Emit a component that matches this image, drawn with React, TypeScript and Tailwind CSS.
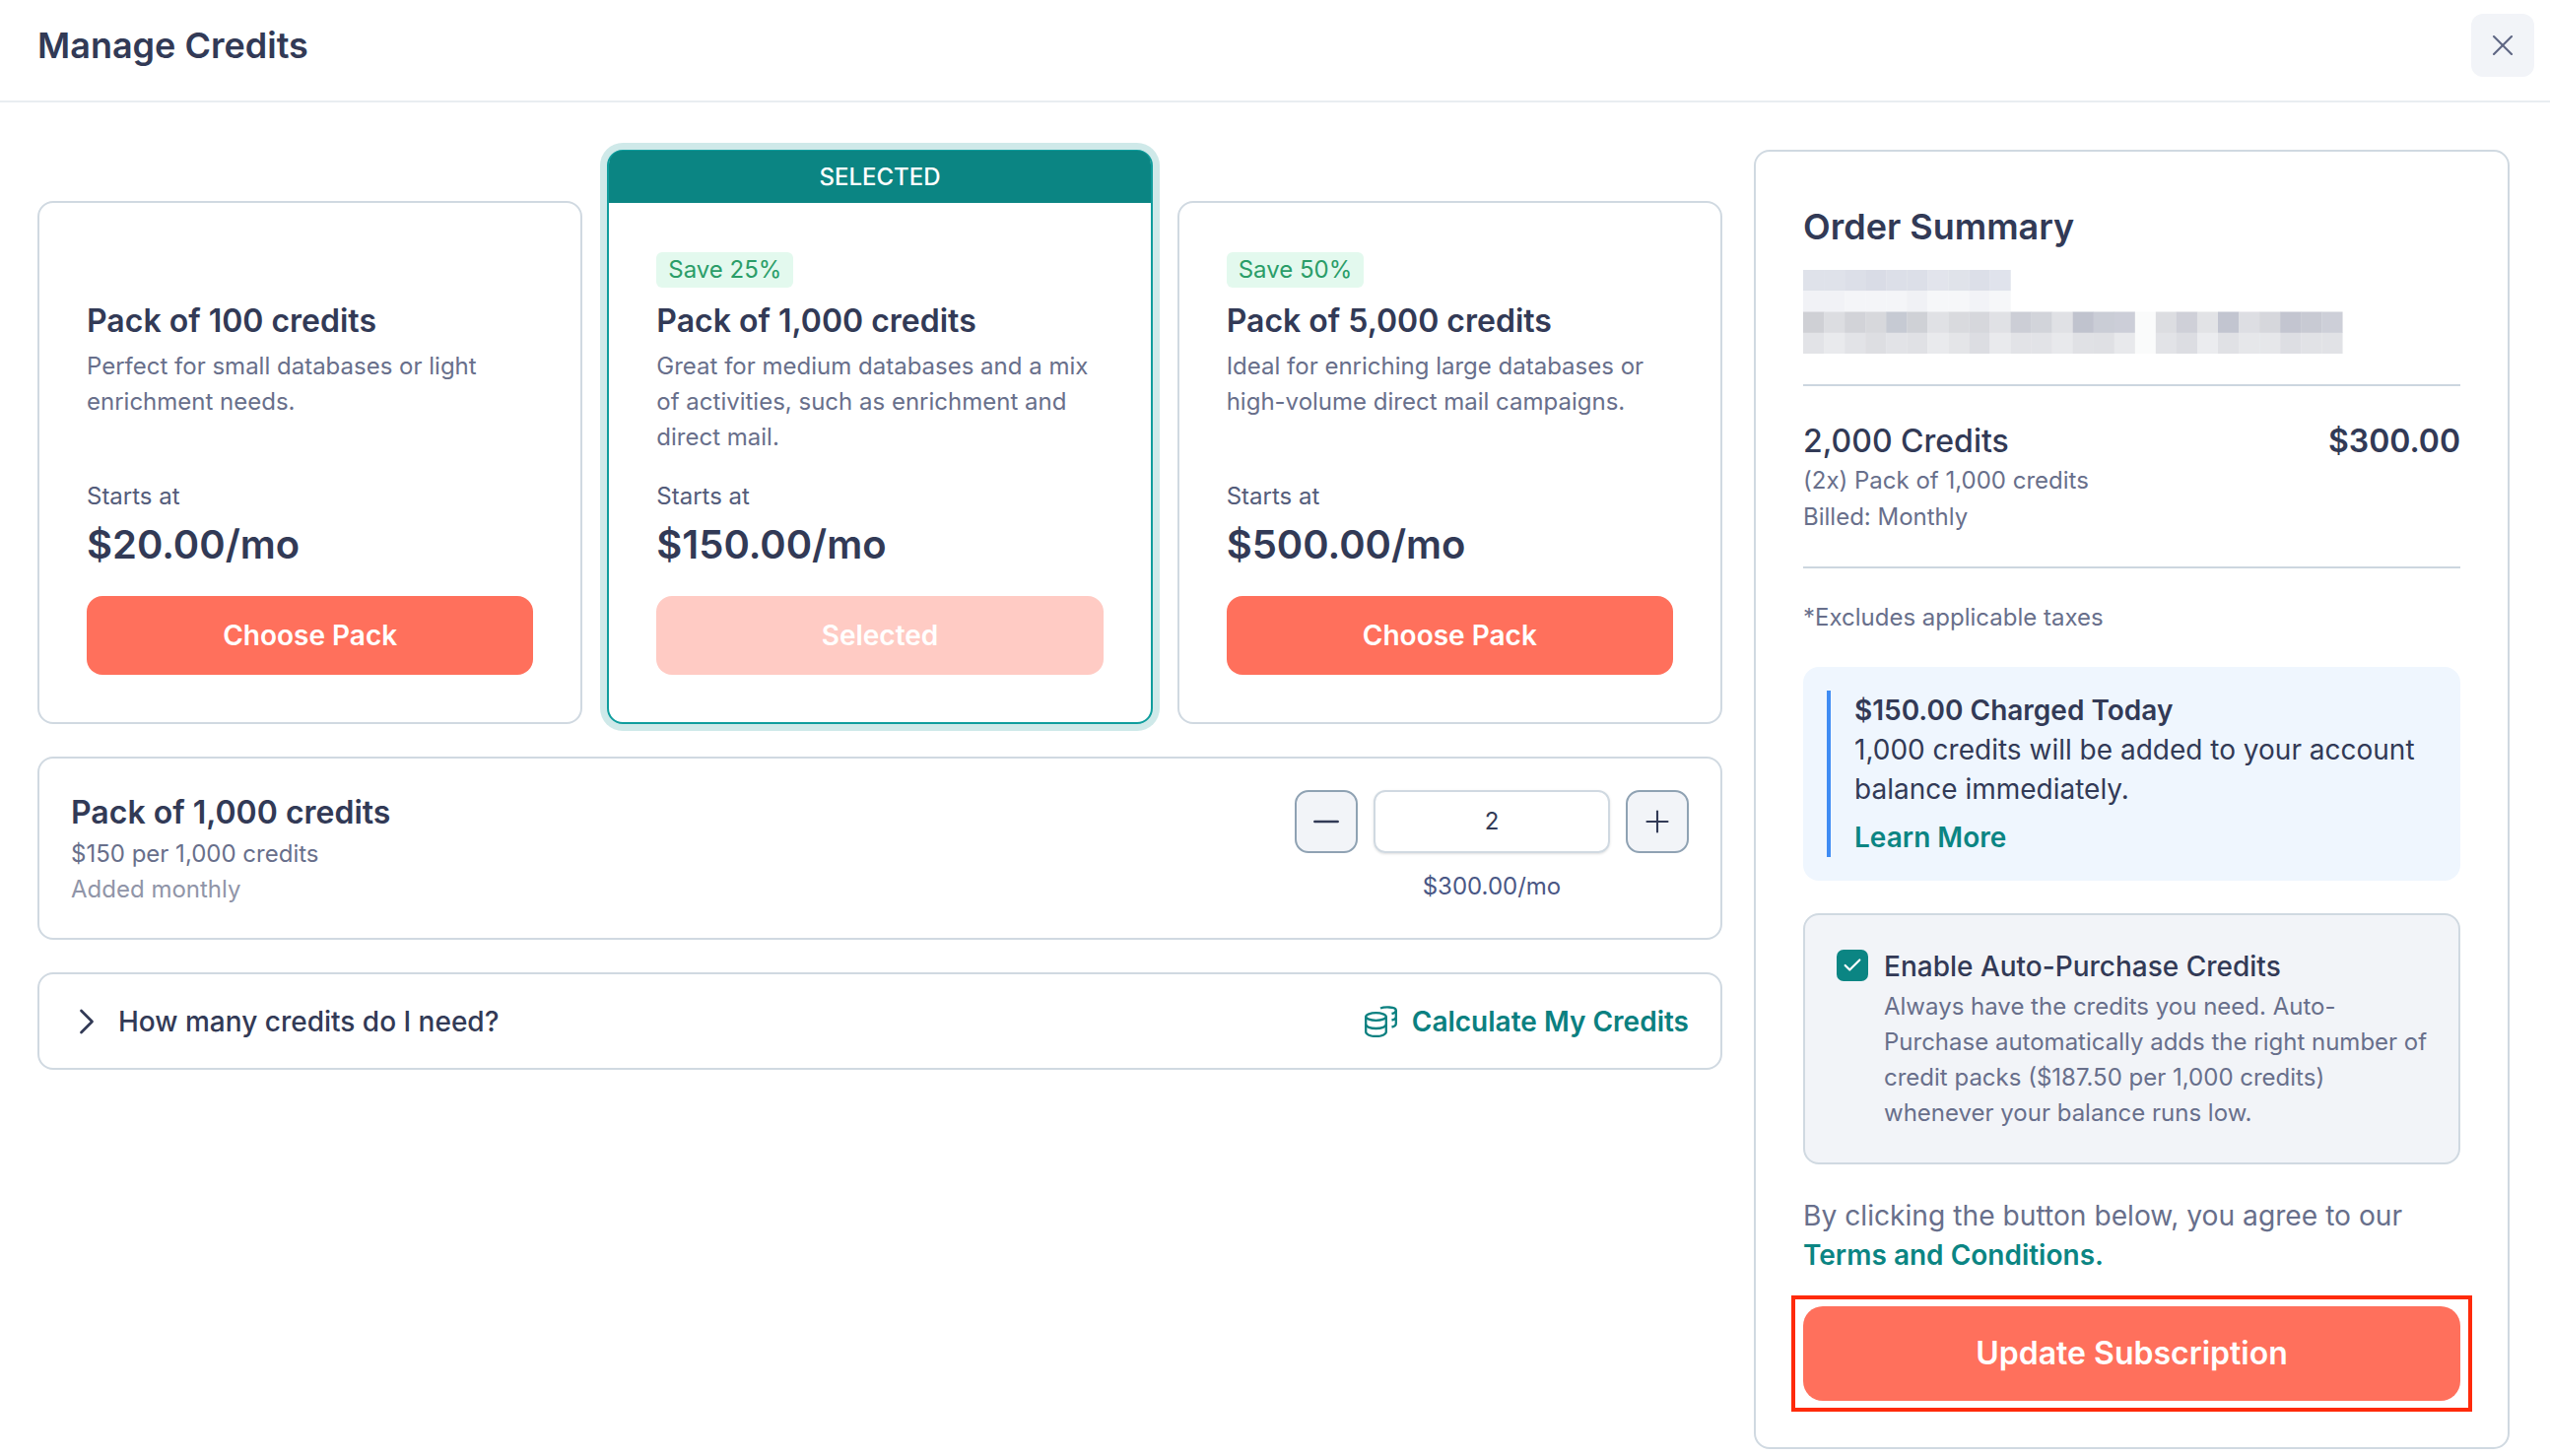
import { Check, ChevronRight, Minus, Plus, X } from "lucide-react"

interface Pack {
  title: string
  desc: string
  price: string
  save?: string
  selected?: boolean
}

const packs: Pack[] = [
  {
    title: "Pack of 100 credits",
    desc: "Perfect for small databases or light enrichment needs.",
    price: "$20.00/mo",
  },
  {
    title: "Pack of 1,000 credits",
    desc: "Great for medium databases and a mix of activities, such as enrichment and direct mail.",
    price: "$150.00/mo",
    save: "Save 25%",
    selected: true,
  },
  {
    title: "Pack of 5,000 credits",
    desc: "Ideal for enriching large databases or high-volume direct mail campaigns.",
    price: "$500.00/mo",
    save: "Save 50%",
  },
]

// pixelated block over the account name and address
const mosaic: string[][] = [
  ["#dfe2ea", "#dfe2ea", "#dcdfe8", "#d9dce6", "#dcdfe8", "#dcdfe8", "#e2e4ec", "#e0e3ea", "#dcdfe8", "#e0e3ec"],
  ["#f1f2f6", "#f1f2f6", "#f4f5f8", "#f4f5f8", "#f4f5f8", "#f0f1f5", "#f6f7f9", "#f6f7f9", "#f2f3f7", "#f6f7f9"],
  ["#cfd0d5", "#dcdde1", "#d2d3d8", "#d7d8dc", "#c6cad3", "#cfd1d6", "#e0e1e5", "#d9dade", "#d6d7dc", "#e0e1e5", "#ccced6", "#d2d4da", "#e0e1e5", "#c0c3ce", "#cacdd6", "#ccced8", "#fafbfb", "#dcdde1", "#cfd0d8", "#e2e3e6", "#c2c5d0", "#dddee3", "#d6d7dc", "#c3c5d0", "#c8cad3", "#cdcfd8"],
  ["#e2e3e7", "#e9eaed", "#e2e3e7", "#dddee2", "#e2e3e7", "#e0e1e5", "#e9eaed", "#e4e5e8", "#dcdde2", "#e9eaed", "#e2e3e7", "#e2e3e7", "#e8e9ec", "#e0e1e5", "#dfe0e4", "#e8e9ec", "#fafbfb", "#e2e3e7", "#dcdde2", "#ebecef", "#e0e1e5", "#e6e7ea", "#e6e7ea", "#dddee3", "#e1e2e6", "#e1e2e6"],
]

function Mosaic() {
  return (
    <svg width="550" height="85" viewBox="0 0 550 85" className="block">
      {mosaic.map((row, r) =>
        row.map((fill, c) => <rect key={`${r}-${c}`} x={c * 21.05} y={r * 21.25} width="21.3" height="21.5" fill={fill} />),
      )}
    </svg>
  )
}

function CoinsIcon() {
  return (
    <svg width="33" height="32" viewBox="0 0 33 32" fill="none" stroke="#0b8080" strokeWidth="2.3" className="block">
      <ellipse cx="11.5" cy="11" rx="10.300" ry="3.800" />
      <path d="M1.200 11V26.500C1.200 29 5.800 31 11.500 31S21.800 29 21.800 26.500V11" />
      <path d="M1.200 18.800C1.200 21.300 5.800 23 11.500 23S21.800 21.300 21.800 18.800" />
      <path d="M16 2.500C19 1.200 31.800 0.500 31.800 4.500C31.800 6 30 7.500 27.500 8" />
      <path d="M31.800 4.500V11C31.800 12.500 30 14 27.500 14.500M31.800 11V18C31.800 19.500 30 21 27.500 21.500" />
    </svg>
  )
}

function PackCard({ pack }: { pack: Pack }) {
  return (
    <div
      className={`flex flex-col rounded-[16px] border-2 bg-white ${
        pack.selected ? "border-[#0f9d9d] ring-[7px] ring-[#cfe9e9]" : "border-[#d0d9e1]"
      }`}
    >
      {pack.selected && (
        <div className="-mt-[1px] flex h-[53px] items-center justify-center rounded-t-[14px] bg-[#0b8583] text-[24px] font-medium text-white">
          SELECTED
        </div>
      )}
      <div className="px-[48px] pt-[50px] pb-[48px]">
        <div className="h-[37px]">
          {pack.save && (
            <span className="inline-block rounded-[6px] bg-[#e3f9ee] px-[12px] text-[24px] leading-[36px] text-[#2a9d68]">
              {pack.save}
            </span>
          )}
        </div>
        <h3 className="mt-[13px] text-[32px] leading-[40px] font-semibold text-[#323a56]">{pack.title}</h3>
        <p className="mt-[8px] h-[110px] text-[24px] leading-[36px] text-[#686f8b]">{pack.desc}</p>
        <p className="mt-[22px] text-[24px] leading-[36px] text-[#545c7a]">Starts at</p>
        <p className="mt-[3px] text-[40px] leading-[56px] font-semibold text-[#323a56]">{pack.price}</p>
        <button
          className={`mt-[24px] h-[80px] w-full rounded-[16px] text-[28px] font-semibold text-white ${
            pack.selected ? "bg-[#ffcbc4]" : "bg-[#ff705c]"
          }`}
        >
          {pack.selected ? "Selected" : "Choose Pack"}
        </button>
      </div>
    </div>
  )
}

export default function App() {
  return (
    <div className="h-[1478px] w-[2588px] overflow-hidden bg-white font-['Inter',sans-serif] text-[#323a56]">
      <header className="flex h-[104px] items-center justify-between border-b-2 border-[#e9edf1] pr-[16px] pb-[10px] pl-[38px]">
        <h1 className="text-[36px] font-semibold">Manage Credits</h1>
        <button className="flex h-[64px] w-[64px] items-center justify-center rounded-[12px] bg-[#f2f4f8] text-[#5e6683]">
          <X size={36} strokeWidth={1.4} />
        </button>
      </header>

      <main className="flex items-start gap-[32px] pt-[48px] pr-[41px] pl-[38px]">
        <div className="w-[1710px] shrink-0">
          <div className="grid grid-cols-3 items-end gap-[25px]">
            {packs.map((pack) => (
              <PackCard key={pack.title} pack={pack} />
            ))}
          </div>

          <section className="mt-[33px] flex h-[186px] justify-between rounded-[16px] border-2 border-[#d0d9e1] pt-[33px] pr-[32px] pl-[32px]">
            <div>
              <h3 className="text-[32px] leading-[44px] font-semibold">Pack of 1,000 credits</h3>
              <p className="mt-[2px] text-[24px] leading-[36px] text-[#686f8b]">$150 per 1,000 credits</p>
              <p className="text-[24px] leading-[36px] text-[#9095a8]">Added monthly</p>
            </div>
            <div className="-mt-[1px] flex flex-col items-center">
              <div className="flex items-center gap-[16px]">
                <button className="flex h-[64px] w-[64px] items-center justify-center rounded-[14px] border-2 border-[#8fa2b3] bg-[#f2f4f8]">
                  <Minus size={40} strokeWidth={1.5} />
                </button>
                <div className="flex h-[64px] w-[240px] items-center justify-center rounded-[12px] border-2 border-[#d0d9e1] text-[24px] shadow-sm">
                  2
                </div>
                <button className="flex h-[64px] w-[64px] items-center justify-center rounded-[14px] border-2 border-[#8fa2b3] bg-[#f2f4f8]">
                  <Plus size={36} strokeWidth={1.4} />
                </button>
              </div>
              <p className="mt-[16px] text-[24px] leading-[36px] text-[#4a5785]">$300.00/mo</p>
            </div>
          </section>

          <section className="mt-[33px] flex h-[99px] items-center justify-between rounded-[16px] border-2 border-[#d0d9e1] pr-[32px] pl-[32px]">
            <div className="flex items-center gap-[10px]">
              <ChevronRight size={44} strokeWidth={1.5} className="-ml-[6px]" />
              <span className="text-[28px] font-medium">How many credits do I need?</span>
            </div>
            <div className="flex items-center gap-[15px]">
              <CoinsIcon />
              <span className="text-[28px] font-semibold text-[#0b8080]">Calculate My Credits</span>
            </div>
          </section>
        </div>

        <aside className="h-[1319px] w-[767px] shrink-0 rounded-[16px] border-2 border-[#d0d9e1] px-[48px] pt-[48px]">
          <h2 className="text-[36px] leading-[56px] font-semibold">Order Summary</h2>
          <div className="mt-[16px]">
            <Mosaic />
          </div>
          <div className="mt-[31px] border-t-2 border-[#ccd6df] pt-[35px] pb-[32px]">
            <div className="flex items-center justify-between text-[32px] leading-[42px]">
              <span className="font-medium">2,000 Credits</span>
              <span className="font-semibold">$300.00</span>
            </div>
            <p className="mt-[1px] text-[24px] leading-[36px] text-[#686f8b]">(2x) Pack of 1,000 credits</p>
            <p className="mt-[1px] text-[24px] leading-[36px] text-[#686f8b]">Billed: Monthly</p>
          </div>
          <div className="border-t-2 border-[#ccd6df] pt-[32px]">
            <p className="text-[24px] leading-[36px] text-[#686f8b]">*Excludes applicable taxes</p>
          </div>

          <div className="mt-[32px] rounded-[16px] bg-[#eff6fe] p-[24px]">
            <div className="border-l-4 border-[#3f8cf3] pl-[24px] text-[28px] leading-[40px]">
              <p className="font-semibold">$150.00 Charged Today</p>
              <p>1,000 credits will be added to your account balance immediately.</p>
              <p className="mt-[9px] font-semibold text-[#0b8583]">Learn More</p>
            </div>
          </div>

          <div className="mt-[33px] flex h-[255px] items-start gap-[16px] rounded-[16px] border-2 border-[#d0d9e1] bg-[#f2f4f8] pt-[35px] pl-[32px]">
            <span className="flex h-[32px] w-[32px] shrink-0 items-center justify-center rounded-[7px] bg-[#0b8583] text-white">
              <Check size={22} strokeWidth={2.4} />
            </span>
            <div className="-mt-[3px] w-[560px]">
              <p className="text-[28px] leading-[40px] font-medium">Enable Auto-Purchase Credits</p>
              <p className="mt-[3px] text-[24px] leading-[36px] text-[#686f8b]">
                Always have the credits you need. Auto-Purchase automatically adds the right number of credit packs
                ($187.50 per 1,000 credits) whenever your balance runs low.
              </p>
            </div>
          </div>

          <p className="mt-[32px] text-[28.2px] leading-[40px] text-[#686f8b]">
            By clicking the button below, you agree to our{" "}
            <span className="text-[28px] font-semibold text-[#0b8583]">Terms and Conditions.</span>
          </p>

          <div className="relative mt-[32px]">
            <button className="h-[96px] w-full rounded-[20px] bg-[#ff705c] text-[32px] font-semibold text-white">
              Update Subscription
            </button>
            <div className="absolute -inset-x-[12px] -inset-y-[11px] border-4 border-[#ff2a0a]" />
          </div>
        </aside>
      </main>
    </div>
  )
}
